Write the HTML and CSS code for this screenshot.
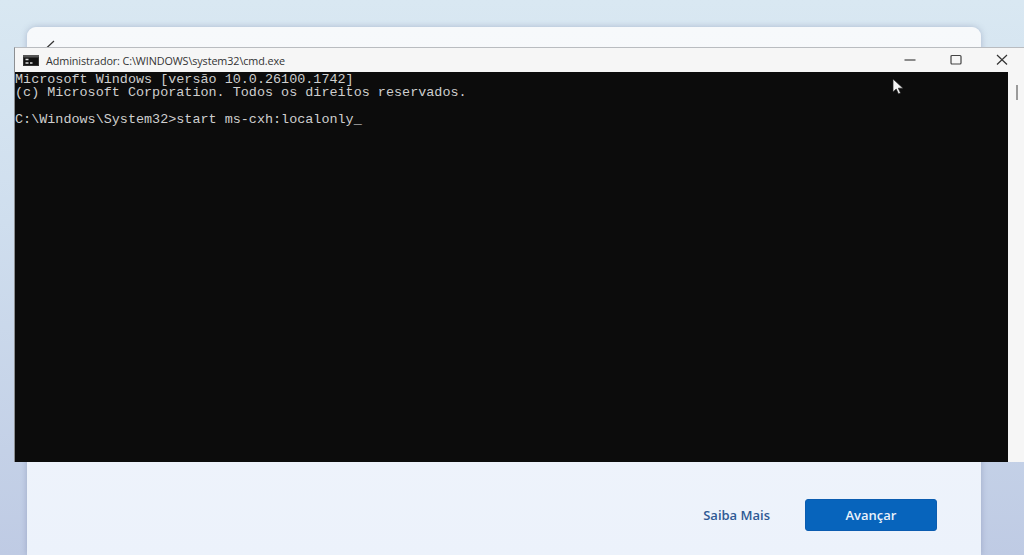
FILE: index.html
```html
<!DOCTYPE html>
<html lang="pt">
<head>
<meta charset="utf-8">
<title>cmd.exe</title>
<link rel="stylesheet" href="styles.css">
</head>
<body>
<main class="card">
  <div class="card-top">
    <svg class="back" width="22" height="14" viewBox="0 0 22 14"><path d="M10 1 2 8.5M2 8.5H21" fill="none" stroke="#333" stroke-width="1.2"/></svg>
  </div>
  <div class="card-foot">
    <a class="link">Saiba Mais</a>
    <button class="next">Avançar</button>
  </div>
</main>
<section class="cmd">
  <header class="titlebar">
    <svg class="cmd-icon" width="16" height="11" viewBox="0 0 16 11"><rect width="16" height="11" fill="#333"/><rect x="0" y="0" width="16" height="2" fill="#555"/><rect x="1" y="3" width="14" height="7" fill="#111"/><path d="M2.5 4.500h3M2.500 8h3M7 8h2.500" stroke="#ddd" stroke-width="1.300"/></svg>
    <span class="title">Administrador: C:\WINDOWS\system32\cmd.exe</span>
    <div class="controls">
      <svg width="12" height="12" viewBox="0 0 12 12"><path d="M.5 6h11" stroke="#444" stroke-width="1.200"/></svg>
      <svg width="12" height="12" viewBox="0 0 12 12"><rect x="1" y="1.500" width="10" height="8.500" rx="1" fill="none" stroke="#444" stroke-width="1.200"/></svg>
      <svg width="12" height="12" viewBox="0 0 12 12"><path d="M1 1l10 9.500M11 1 1 10.500" stroke="#333" stroke-width="1.200"/></svg>
    </div>
  </header>
  <div class="cmd-body">
    <pre class="console">Microsoft Windows [versão 10.0.26100.1742]
(c) Microsoft Corporation. Todos os direitos reservados.

C:\Windows\System32&gt;start ms-cxh:localonly<span class="caret">_</span></pre>
    <div class="scroll"><span class="thumb"></span></div>
  </div>
  <svg class="pointer" width="14" height="18" viewBox="0 0 14 18"><path d="M1 1v13l3.200-3 2.300 5 2-1-2.200-4.800H11z" fill="#f4f4f4" stroke="#222" stroke-width=".7"/></svg>
</section>
</body>
</html>
```
FILE: styles.css
```css
* { box-sizing: border-box; }
html, body { margin: 0; height: 555px; overflow: hidden; }
body {
  padding: 27px 43px 0 27px;
  background: linear-gradient(180deg, #d9e8f2 0%, #cfdeee 40%, #bfcbe4 100%);
  font-family: "Open Sans", "Noto Sans", sans-serif;
}
.card {
  height: 528px;
  width: 954px;
  border-radius: 9px 9px 0 0;
  background: linear-gradient(180deg, #f7f9fb 0%, #eef3fb 80%, #ecf2fb 100%);
  box-shadow: 0 0 6px rgba(90, 100, 140, .35);
  display: flex;
  flex-direction: column;
  justify-content: space-between;
}
.card-top { padding: 13px 0 0 17px; }
.back { display: block; }
.card-foot {
  display: flex;
  align-items: center;
  justify-content: flex-end;
  gap: 35px;
  padding: 0 44px 24px 0;
}
.link { color: #2f5a94; font-size: 13px; font-weight: 600; }
.next {
  width: 132px;
  height: 32px;
  border: 1px solid #0a5cb0;
  border-radius: 3px;
  background: #0764bc;
  color: #eaf2fb;
  font: 600 13px "Open Sans", "Noto Sans", sans-serif;
}
.cmd {
  position: absolute;
  left: 14px;
  top: 47px;
  width: 1010px;
  height: 415px;
  display: flex;
  flex-direction: column;
  background: #f5f5f5;
  border-top: 1px solid #b9bcc0;
  border-left: 1px solid #8c8f92;
}
.titlebar {
  height: 24px;
  flex: none;
  display: flex;
  align-items: center;
  padding-left: 8px;
  background: #f6f6f6;
}
.cmd-icon { margin-right: 7px; }
.title { font-size: 10.800px; color: #333; white-space: nowrap; letter-spacing: -.1px; }
.controls {
  margin-left: auto;
  display: flex;
  gap: 34px;
  padding-right: 16px;
}
.cmd-body { flex: 1; display: flex; min-height: 0; }
.console {
  flex: 1;
  margin: 0;
  padding: 1px 0 0;
  background: #0c0c0c;
  color: #cfcfcf;
  font: 13.450px/13.300px "Liberation Mono", monospace;
  font-weight: 400;
}
.caret { color: #e8e8e8; font-weight: 700; }
.scroll { width: 16px; flex: none; padding: 13px 0 0 8px; background: #f6f6f6; }
.thumb { display: block; width: 2px; height: 15px; background: #9a9a9a; }
.pointer { position: absolute; left: 877px; top: 30px; }
```
